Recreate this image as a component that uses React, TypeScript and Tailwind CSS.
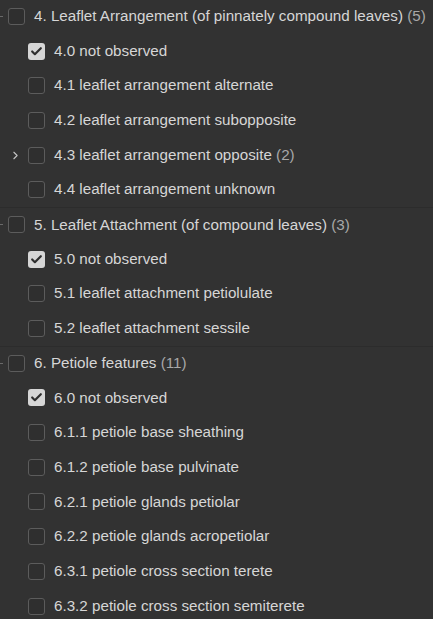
import { Check, ChevronRight } from 'lucide-react';

type Item = { label: string; checked?: boolean; expandable?: boolean; count?: number };
type Group = { title: string; count: number; items: Item[] };

const groups: Group[] = [
  {
    title: '4. Leaflet Arrangement (of pinnately compound leaves)',
    count: 5,
    items: [
      { label: '4.0 not observed', checked: true },
      { label: '4.1 leaflet arrangement alternate' },
      { label: '4.2 leaflet arrangement subopposite' },
      { label: '4.3 leaflet arrangement opposite', expandable: true, count: 2 },
      { label: '4.4 leaflet arrangement unknown' },
    ],
  },
  {
    title: '5. Leaflet Attachment (of compound leaves)',
    count: 3,
    items: [
      { label: '5.0 not observed', checked: true },
      { label: '5.1 leaflet attachment petiolulate' },
      { label: '5.2 leaflet attachment sessile' },
    ],
  },
  {
    title: '6. Petiole features',
    count: 11,
    items: [
      { label: '6.0 not observed', checked: true },
      { label: '6.1.1 petiole base sheathing' },
      { label: '6.1.2 petiole base pulvinate' },
      { label: '6.2.1 petiole glands petiolar' },
      { label: '6.2.2 petiole glands acropetiolar' },
      { label: '6.3.1 petiole cross section terete' },
      { label: '6.3.2 petiole cross section semiterete' },
    ],
  },
];

const Box = ({ checked }: { checked?: boolean }) =>
  checked ? (
    <div className="flex h-[17px] w-[17px] shrink-0 items-center justify-center rounded-[3px] bg-[#d6d6d6]">
      <Check className="h-[13px] w-[13px] text-[#2e2e2e]" strokeWidth={4} />
    </div>
  ) : (
    <div className="h-[17px] w-[17px] shrink-0 rounded-[3px] border border-[#5c5c5c] bg-[#2f2f2f]" />
  );

const App = () => {
  return (
    <div className="h-[619px] w-[433px] overflow-hidden bg-[#323232] font-['Liberation_Sans',Arial,sans-serif] text-[15.2px] text-[#d6d6d6]">
      <div className="-mt-[1px]">
        {groups.map((g, gi) => (
          <div key={g.title} className={gi > 0 ? 'border-t border-[#2c2c2c]' : ''}>
            <div className={`relative flex items-center ${gi > 0 ? 'h-[33.7px]' : 'h-[34.7px]'}`}>
              <div className="absolute left-0 h-px w-[3px] bg-[#6a6a6a]" />
              <div className="ml-[8px]">
                <Box />
              </div>
              <span className="ml-[9px] whitespace-nowrap">
                {g.title} <span className="text-[#a8a8a8]">({g.count})</span>
              </span>
            </div>
            {g.items.map((it) => (
              <div key={it.label} className="relative flex h-[34.7px] items-center">
                {it.expandable && (
                  <ChevronRight className="absolute left-[9px] h-[13px] w-[13px] text-[#c4c4c4]" strokeWidth={2} />
                )}
                <div className="ml-[28px]">
                  <Box checked={it.checked} />
                </div>
                <span className="ml-[9px] whitespace-nowrap">
                  {it.label}
                  {it.count !== undefined && <span className="text-[#a8a8a8]"> ({it.count})</span>}
                </span>
              </div>
            ))}
          </div>
        ))}
      </div>
    </div>
  );
};

export default App;
